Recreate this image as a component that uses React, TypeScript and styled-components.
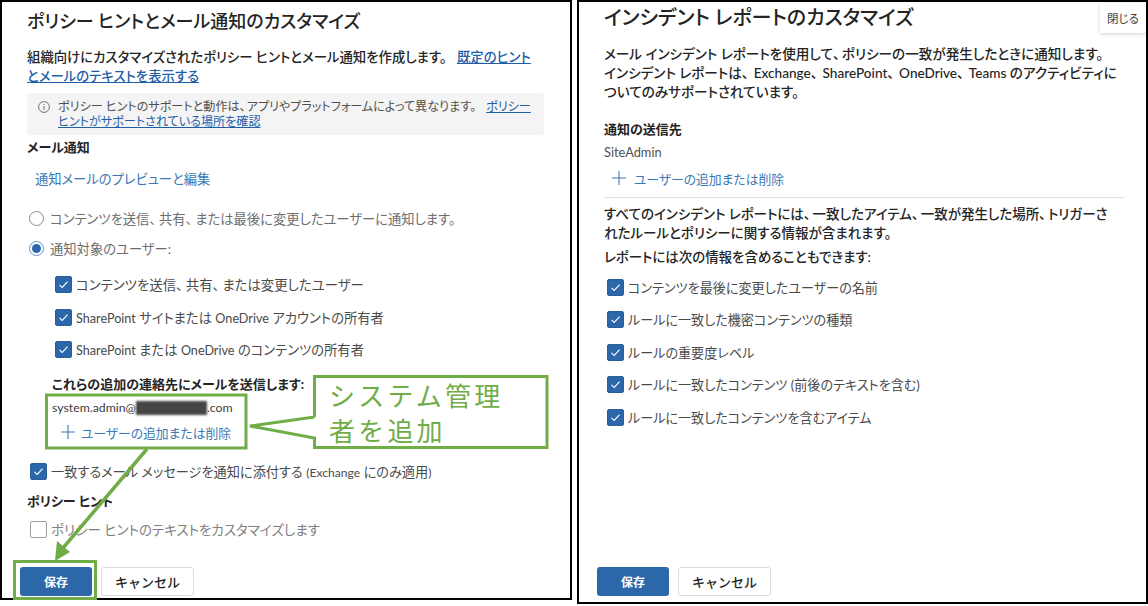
import React from "react";
import styled, { createGlobalStyle } from "styled-components";

const Global = createGlobalStyle`
  html, body { margin: 0; padding: 0; background: #fff; overflow: hidden; }
  body { font-family: Lato, "Noto Sans CJK JP", "Noto Sans", sans-serif; font-feature-settings: "palt"; color: #323130; }
`;
const Page = styled.div`
  position: relative; width: 1148px; height: 606px; display: flex; align-items: flex-start; gap: 5px;
`;
const Panel = styled.section<{ $w: number; $h: number; $pl: number }>`
  position: relative; box-sizing: border-box; width: ${p => p.$w}px; height: ${p => p.$h}px;
  border: 2px solid #000; padding-left: ${p => p.$pl}px; display: flex; flex-direction: column;
  overflow: hidden;
`;
const Title = styled.h1<{ $top: number; $size: number }>`
  margin: ${p => p.$top}px 0 0; height: 26px; line-height: 26px; font-size: ${p => p.$size}px; font-weight: 500; color: #242424; white-space: nowrap;
`;
const Para = styled.p<{ $top: number; $size: number }>`
  margin: ${p => p.$top}px 0 0; width: 535px; font-size: ${p => p.$size}px; line-height: 19px; font-weight: 500; color: #242424; white-space: nowrap;
`;
const A = styled.a`
  color: #1f5fa8; text-decoration: underline; margin-left: 7px;
`;
const Latin = styled.span<{ $scale?: number }>`
  font-size: ${p => p.$scale ?? 0.95}em;
`;
const Comma = styled.span<{ $sp?: number }>`
  letter-spacing: ${p => p.$sp ?? 3}px;
`;
const InfoBox = styled.div`
  margin-top: 7px; width: 517px; height: 42px; box-sizing: border-box; background: #f4f4f4; border-radius: 3px;
  display: flex; padding: 6px 0 0 11px; gap: 8px; font-size: 12.1px; line-height: 15px; color: #505050; white-space: nowrap;
  svg { flex: none; margin-top: 2px; }
`;
const Heading = styled.h2<{ $top: number; $left?: number; $size?: number }>`
  margin: ${p => p.$top}px 0 0 ${p => p.$left ?? 0}px; height: 18px; line-height: 18px; font-size: ${p => p.$size ?? 13}px; font-weight: 700; color: #242424; white-space: nowrap;
`;
const LinkText = styled.div<{ $top: number; $left: number }>`
  margin: ${p => p.$top}px 0 0 ${p => p.$left}px; height: 18px; line-height: 18px; font-size: 13.3px; color: #3b78b5;
`;
const AddRow = styled.div<{ $top: number; $left: number; $gap: number }>`
  margin: ${p => p.$top}px 0 0 ${p => p.$left}px; height: 18px; display: flex; align-items: center; gap: ${p => p.$gap}px;
  font-size: 12.8px; color: #3b78b5;
`;
const RadioRow = styled.div<{ $top: number }>`
  margin: ${p => p.$top}px 0 0 2px; height: 18px; display: flex; align-items: center; gap: 6px; font-size: 13.3px; color: #6e6e6e; white-space: nowrap;
`;
const RadioMark = styled.span<{ $on?: boolean }>`
  box-sizing: border-box; width: 15px; height: 15px; border-radius: 50%; flex: none; background: #fff;
  border: 1px solid ${p => (p.$on ? "#5b93cf" : "#8a8a8a")};
  display: flex; align-items: center; justify-content: center;
  &::after { content: ""; width: 9px; height: 9px; border-radius: 50%; background: ${p => (p.$on ? "#2a67ac" : "transparent")}; }
`;
const CheckRow = styled.div<{ $top: number; $left: number; $muted?: boolean; $size: number }>`
  margin: ${p => p.$top}px 0 0 ${p => p.$left}px; height: 18px; display: flex; align-items: center; gap: 4px;
  font-size: ${p => p.$size}px; color: ${p => (p.$muted ? "#808080" : "#4a4a4a")}; white-space: nowrap;
`;
const CheckBox = styled.span<{ $on?: boolean }>`
  box-sizing: border-box; width: 17px; height: 17px; border-radius: 2px; flex: none; display: flex; align-items: center; justify-content: center;
  background: ${p => (p.$on ? "#2b67a9" : "#fff")}; border: 1px solid ${p => (p.$on ? "#2b5f98" : "#a0a0a0")};
`;
const Email = styled.div`
  margin: 6px 0 0 25px; height: 18px; line-height: 18px; font-size: 12.3px; color: #404040; display: flex; align-items: center;
`;
const Redacted = styled.span`
  display: inline-block; width: 71px; height: 14px; background: #444; filter: blur(1px);
`;
const Plain = styled.div<{ $top: number }>`
  margin-top: ${p => p.$top}px; height: 18px; line-height: 18px; font-size: 12.8px; color: #505050;
`;
const Divider = styled.hr`
  margin: 10px 0 0; width: 521px; border: 0; height: 1px; background: #e2e2e2;
`;
const Actions = styled.div<{ $bottom: number }>`
  margin: auto 0 ${p => p.$bottom}px -7px; display: flex; gap: 9px;
`;
const Primary = styled.button`
  box-sizing: border-box; width: 72px; height: 29px; border: 0; border-radius: 3px; background: #2b67a9; color: #fff;
  font: 700 12px "Noto Sans CJK JP", sans-serif;
`;
const Secondary = styled.button`
  box-sizing: border-box; width: 93px; height: 29px; border: 1px solid #dcdcdc; border-radius: 3px; background: #fff; color: #242424;
  font: 500 13px "Noto Sans CJK JP", sans-serif;
`;
const Close = styled.div`
  position: absolute; top: 1px; right: 0; width: 46px; height: 30px; background: #fff; box-shadow: 0 1px 4px rgba(0,0,0,.18);
  display: flex; align-items: center; justify-content: center; font-size: 11.5px; color: #404040;
`;
const Overlay = styled.svg`
  position: absolute; left: 0; top: 0; pointer-events: none;
`;
const CalloutText = styled.div`
  position: absolute; left: 329px; top: 377px; width: 190px; font-size: 26px; line-height: 35px; letter-spacing: 3.2px;
  color: #70ad47; font-family: "Noto Sans CJK JP", sans-serif; font-weight: 400; font-feature-settings: normal;
`;

const Tick = () => (
  <svg width="11" height="11" viewBox="0 0 11 11" fill="none"><path d="M1.5 5.8 4.2 8.4 9.6 2.6" stroke="#fff" strokeWidth="1.1" /></svg>
);
const Plus = () => (
  <svg width="14" height="14" viewBox="0 0 14 14"><path d="M7 0v14M0 7h14" stroke="#3b78b5" strokeWidth="1.1" /></svg>
);
const Info = () => (
  <svg width="12" height="12" viewBox="0 0 12 12" fill="none">
    <circle cx="6" cy="6" r="5.4" stroke="#666" strokeWidth=".9" />
    <path d="M6 5.2v3.6" stroke="#666" /><circle cx="6" cy="3.5" r=".6" fill="#666" />
  </svg>
);
const Check = ({ top, left, size, children, off, muted }: { top: number; left: number; size: number; children: React.ReactNode; off?: boolean; muted?: boolean }) => (
  <CheckRow $top={top} $left={left} $size={size} $muted={muted}>
    <CheckBox $on={!off}>{!off && <Tick />}</CheckBox>
    <span>{children}</span>
  </CheckRow>
);
const Buttons = ({ bottom }: { bottom: number }) => (
  <Actions $bottom={bottom}>
    <Primary>保存</Primary>
    <Secondary>キャンセル</Secondary>
  </Actions>
);

export default function App() {
  return (
    <Page>
      <Global />
      <Panel $w={572} $h={600} $pl={25}>
        <Title $top={6} $size={18}>ポリシー ヒントとメール通知のカスタマイズ</Title>
        <Para $top={14} $size={13.4}>組織向けにカスタマイズされたポリシー ヒントとメール通知を作成します。 <A>既定のヒント<br />とメールのテキストを表示する</A></Para>
        <InfoBox>
          <Info />
          <div>ポリシー ヒントのサポートと動作は<Comma $sp={1}>、</Comma>アプリやプラットフォームによって異なります。 <A>ポリシー<br />ヒントがサポートされている場所を確認</A></div>
        </InfoBox>
        <Heading $top={3}>メール通知</Heading>
        <LinkText $top={14} $left={8}>通知メールのプレビューと編集</LinkText>
        <RadioRow $top={21}><RadioMark /><span>コンテンツを送信<Comma>、</Comma>共有<Comma>、</Comma>または最後に変更したユーザーに通知します。</span></RadioRow>
        <RadioRow $top={12}><RadioMark $on /><span>通知対象のユーザー:</span></RadioRow>
        <Check top={18} left={28} size={13.4}>コンテンツを送信<Comma>、</Comma>共有<Comma>、</Comma>または変更したユーザー</Check>
        <Check top={15} left={28} size={13.3}><Latin>SharePoint</Latin> サイトまたは <Latin>OneDrive</Latin> アカウントの所有者</Check>
        <Check top={14} left={28} size={13.3}><Latin>SharePoint</Latin> または <Latin>OneDrive</Latin> のコンテンツの所有者</Check>
        <Heading $top={17} $left={25}>これらの追加の連絡先にメールを送信します:</Heading>
        <Email>system.admin@<Redacted />.com</Email>
        <AddRow $top={6} $left={34} $gap={6}><Plus />ユーザーの追加または削除</AddRow>
        <Check top={21} left={3} size={13.2}>一致するメール メッセージを通知に添付する <Latin $scale={0.92}>(Exchange</Latin> にのみ適用<Latin $scale={0.92}>)</Latin></Check>
        <Heading $top={12}>ポリシー ヒント</Heading>
        <Check top={10} left={3} size={13.5} off muted>ポリシー ヒントのテキストをカスタマイズします</Check>
        <Buttons bottom={2} />
      </Panel>
      <Panel $w={571} $h={604} $pl={25}>
        <Title $top={2} $size={20}>インシデント レポートのカスタマイズ</Title>
        <Para $top={15} $size={13.6}>メール インシデント レポートを使用して<Comma $sp={2}>、</Comma>ポリシーの一致が発生したときに通知します。<br />インシデント レポートは<Comma $sp={5}>、</Comma><Latin $scale={1}>Exchange</Latin><Comma $sp={5}>、</Comma><Latin $scale={1}>SharePoint</Latin><Comma $sp={5}>、</Comma><Latin $scale={1}>OneDrive</Latin><Comma $sp={5}>、</Comma><Latin $scale={1}>Teams</Latin> のアクティビティに<br />ついてのみサポートされています。</Para>
        <Heading $top={18}>通知の送信先</Heading>
        <Plain $top={5}>SiteAdmin</Plain>
        <AddRow $top={8} $left={8} $gap={8}><Plus />ユーザーの追加または削除</AddRow>
        <Divider />
        <Para $top={7} $size={13.5}>すべてのインシデント レポートには<Comma $sp={2}>、</Comma>一致したアイテム<Comma $sp={2}>、</Comma>一致が発生した場所<Comma $sp={2}>、</Comma>トリガーさ<br />れたルールとポリシーに関する情報が含まれます。</Para>
        <Para $top={5} $size={13.45}>レポートには次の情報を含めることもできます:</Para>
        <Check top={11} left={3} size={13.1}>コンテンツを最後に変更したユーザーの名前</Check>
        <Check top={14} left={3} size={13.1}>ルールに一致した機密コンテンツの種類</Check>
        <Check top={15} left={3} size={13.1}>ルールの重要度レベル</Check>
        <Check top={14} left={3} size={13.1}>ルールに一致したコンテンツ (前後のテキストを含む)</Check>
        <Check top={15} left={3} size={13.1}>ルールに一致したコンテンツを含むアイテム</Check>
        <Buttons bottom={6} />
        <Close>閉じる</Close>
      </Panel>
      <Overlay width="1148" height="606" viewBox="0 0 1148 606" fill="none">
        <rect x="46.5" y="395" width="199.5" height="53" stroke="#70ad47" strokeWidth="3" />
        <path d="M314.5 417V376.5H547V447.5H314.5V438L250 426L314.5 417" stroke="#70ad47" strokeWidth="3" />
        <rect x="14.5" y="561.5" width="81" height="37" stroke="#70ad47" strokeWidth="3" />
        <path d="M147 449 63 548" stroke="#70ad47" strokeWidth="3.5" />
        <path d="M55 561 57 541 70 552Z" fill="#70ad47" />
      </Overlay>
      <CalloutText>システム管理者を追加</CalloutText>
    </Page>
  );
}
